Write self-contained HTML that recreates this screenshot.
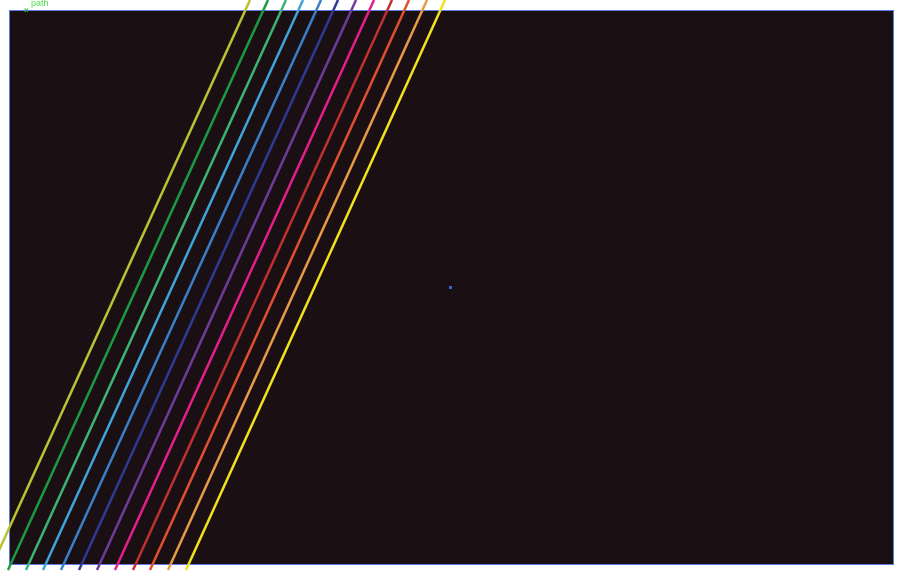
<!DOCTYPE html>
<html><head><style>html,body{margin:0;padding:0;background:#fff;width:900px;height:575px;overflow:hidden}</style></head>
<body>
<svg width="900" height="575" viewBox="0 0 900 575" xmlns="http://www.w3.org/2000/svg">
<rect x="9.5" y="10.5" width="884" height="554" fill="#1a1013" stroke="#5a7de0" stroke-width="1"/>
<g stroke-width="2.5" fill="none">
<line x1="250" y1="0" x2="-10" y2="570" stroke="#bcc232"/>
<line x1="268" y1="0" x2="8" y2="570" stroke="#1a9a45"/>
<line x1="286" y1="0" x2="26" y2="570" stroke="#3cb473"/>
<line x1="303" y1="0" x2="43" y2="570" stroke="#3fa3dc"/>
<line x1="321" y1="0" x2="61" y2="570" stroke="#3a7fc6"/>
<line x1="338" y1="0" x2="79" y2="570" stroke="#2f3a94"/>
<line x1="356" y1="0" x2="97" y2="570" stroke="#6c3b9b"/>
<line x1="374" y1="0" x2="115" y2="570" stroke="#e21f8c"/>
<line x1="392" y1="0" x2="133" y2="570" stroke="#c0302f"/>
<line x1="409" y1="0" x2="150" y2="570" stroke="#e0502f"/>
<line x1="427" y1="0" x2="168" y2="570" stroke="#e89a45"/>
<line x1="445" y1="0" x2="186" y2="570" stroke="#f2e21c"/>
</g>
<text x="31" y="6" font-family="Liberation Sans, sans-serif" font-size="9" fill="#4ddf4d">path</text>
<text x="24" y="13" font-family="Liberation Sans, sans-serif" font-size="8" font-weight="bold" fill="#2fb04a">×</text>
<rect x="449" y="286" width="3" height="3" fill="#3c5fd8"/>
</svg>
</body></html>
